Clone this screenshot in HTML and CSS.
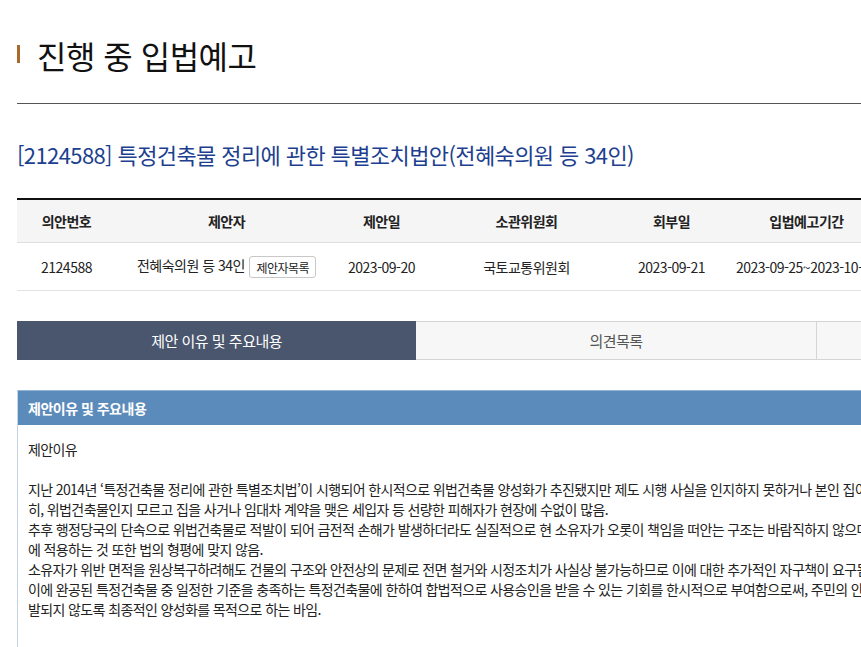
FILE: index.html
```html
<!DOCTYPE html>
<html lang="ko">
<head>
    <meta charset="UTF-8">
    <meta name="viewport" content="width=device-width, initial-scale=1.0">
    <title>진행 중 입법예고</title>
    <link rel="stylesheet" href="styles.css">
</head>
<body>
    <div class="page">
        <div class="page-head">
            <h2 class="page-title">진행 중 입법예고</h2>
        </div>

        <h3 class="bill-title">[2124588] 특정건축물 정리에 관한 특별조치법안(전혜숙의원 등 34인)</h3>

        <table class="bill-info">
            <thead>
                <tr>
                    <th class="col-no">의안번호</th>
                    <th class="col-proposer">제안자</th>
                    <th class="col-date">제안일</th>
                    <th class="col-committee">소관위원회</th>
                    <th class="col-date2">회부일</th>
                    <th class="col-period">입법예고기간</th>
                </tr>
            </thead>
            <tbody>
                <tr>
                    <td>2124588</td>
                    <td>전혜숙의원 등 34인 <button type="button" class="btn-small">제안자목록</button></td>
                    <td>2023-09-20</td>
                    <td>국토교통위원회</td>
                    <td>2023-09-21</td>
                    <td>2023-09-25~2023-10-05</td>
                </tr>
            </tbody>
        </table>

        <ul class="tabs">
            <li class="tab active">제안 이유 및 주요내용</li>
            <li class="tab">의견목록</li>
            <li class="tab">의견등록</li>
        </ul>

        <div class="content-box">
            <div class="content-head">제안이유 및 주요내용</div>
            <div class="content-body">
                제안이유<br>
                <br>
                지난 2014년 ‘특정건축물 정리에 관한 특별조치법’이 시행되어 한시적으로 위법건축물 양성화가 추진됐지만 제도 시행 사실을 인지하지 못하거나 본인 집이 위법건축물인지 몰라 양성화 기회를 놓친 경우가 많으며, 특<br>
                히, 위법건축물인지 모르고 집을 사거나 임대차 계약을 맺은 세입자 등 선량한 피해자가 현장에 수없이 많음.<br>
                추후 행정당국의 단속으로 위법건축물로 적발이 되어 금전적 손해가 발생하더라도 실질적으로 현 소유자가 오롯이 책임을 떠안는 구조는 바람직하지 않으며, 과거의 위법행위에 대한 책임을 현 소유자<br>
                에 적용하는 것 또한 법의 형평에 맞지 않음.<br>
                소유자가 위반 면적을 원상복구하려해도 건물의 구조와 안전상의 문제로 전면 철거와 시정조치가 사실상 불가능하므로 이에 대한 추가적인 자구책이 요구됨.<br>
                이에 완공된 특정건축물 중 일정한 기준을 충족하는 특정건축물에 한하여 합법적으로 사용승인을 받을 수 있는 기회를 한시적으로 부여함으로써, 주민의 안전을 확보하고 위법건축물이 다시 유<br>
                발되지 않도록 최종적인 양성화를 목적으로 하는 바임.<br>
                <br>
                <br>
            </div>
        </div>
    </div>
</body>
</html>
```

FILE: styles.css
```css
html, body {
    overflow-x: hidden;
}
body {
    margin: 0;
    font-family: 'Noto Sans CJK KR', 'Noto Sans', sans-serif;
    font-size: 14px;
    letter-spacing: -0.5px;
    color: #222;
    background-color: #fff;
}
.page {
    width: 1200px;
    margin-left: 17px;
}

/* page heading */
.page-head {
    padding: 35px 0 28px;
    border-bottom: 1px solid #555;
}
.page-title {
    position: relative;
    margin: 0;
    padding-left: 20px;
    font-size: 32px;
    font-weight: normal;
    line-height: 40px;
    letter-spacing: -0.5px;
    color: #111;
}
.page-title::before {
    content: '';
    position: absolute;
    left: 0;
    top: 10px;
    width: 3px;
    height: 18px;
    background-color: #a86a2a;
}

.bill-title {
    margin: 35px 0 29px;
    font-size: 22px;
    font-weight: normal;
    line-height: 30px;
    letter-spacing: -0.6px;
    color: #1d3f8f;
}

/* bill summary table */
.bill-info {
    border-collapse: collapse;
    table-layout: fixed;
    border-top: 2px solid #111;
}
.bill-info th,
.bill-info td {
    padding: 0;
    text-align: center;
    white-space: nowrap;
}
.bill-info th {
    height: 42px;
    background-color: #f5f5f5;
    border-bottom: 1px solid #dedede;
    font-weight: bold;
}
.bill-info td {
    height: 47px;
    border-bottom: 1px solid #e3e3e3;
}
.bill-info .col-no { width: 99px; }
.bill-info .col-proposer { width: 221px; }
.bill-info .col-date { width: 89px; }
.bill-info .col-committee { width: 201px; }
.bill-info .col-date2 { width: 89px; }
.bill-info .col-period { width: 181px; }
.btn-small {
    height: 22px;
    margin-left: 1px;
    padding: 0 6px;
    border: 1px solid #c8c8c8;
    border-radius: 3px;
    background-color: #fff;
    font-family: inherit;
    font-size: 12px;
    letter-spacing: -0.5px;
    color: #222;
    vertical-align: middle;
}

/* tabs */
.tabs {
    display: flex;
    margin: 30px 0 0;
    padding: 0;
    list-style: none;
}
.tab {
    width: 400px;
    height: 37px;
    line-height: 37px;
    text-align: center;
    font-size: 15px;
    color: #555;
    background-color: #f7f7f7;
    border: 1px solid #d5d5d5;
    border-left: none;
}
.tab.active {
    height: 39px;
    line-height: 39px;
    border: none;
    background-color: #4a566e;
    color: #fff;
}

/* content box */
.content-box {
    margin-top: 30px;
    border-left: 1px solid #c3d4e8;
}
.content-head {
    height: 34px;
    padding-left: 10px;
    line-height: 34px;
    border-top: 1px solid #93b4d6;
    background-color: #5b8bbb;
    color: #fff;
    font-weight: bold;
}
.content-body {
    padding: 14px 10px 20px;
    line-height: 20px;
    letter-spacing: -0.62px;
    white-space: nowrap;
}
```
